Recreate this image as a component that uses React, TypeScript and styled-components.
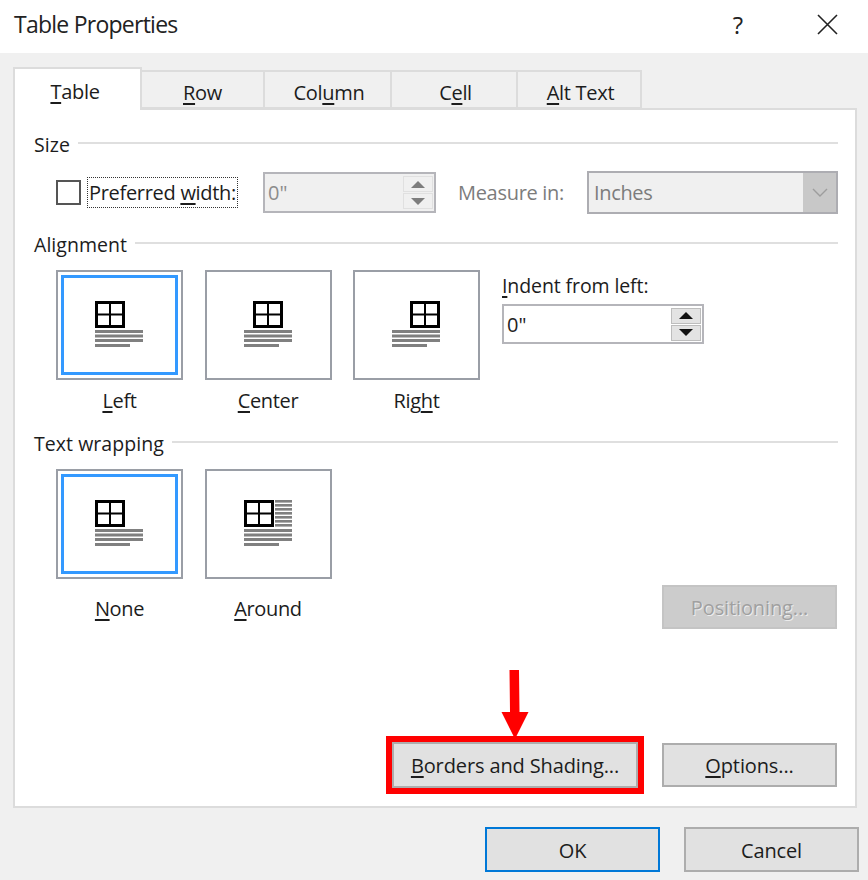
import React from "react";
import styled, { createGlobalStyle } from "styled-components";

const Global = createGlobalStyle`
  html, body { margin: 0; padding: 0; background: #fff; }
  body { font-family: "Open Sans", "Noto Sans", sans-serif; color: #1c1c1c; }
  * { box-sizing: border-box; }
  u { text-decoration-thickness: 1.5px; text-underline-offset: 3px; }
`;

const Dialog = styled.div`
  width: 868px;
  height: 880px;
  display: flex;
  flex-direction: column;
  overflow: hidden;
`;
const TitleBar = styled.header`
  height: 53px;
  flex: none;
  display: flex;
  align-items: center;
  padding: 0 30px 5px 14px;
  background: #fff;
`;
const Title = styled.h1`
  flex: 1;
  margin: 0;
  font-size: 23px;
  font-weight: 400;
  letter-spacing: -0.75px;
  color: #222;
`;
const HelpMark = styled.span`
  font-size: 24px;
  margin-right: 74px;
  color: #222;
`;
const Body = styled.main`
  flex: 1;
  display: flex;
  flex-direction: column;
  background: #f0f0f0;
  padding: 14px 11px 0 13px;
`;
const Tabs = styled.nav`
  display: flex;
  align-items: flex-end;
  height: 43px;
  position: relative;
  z-index: 1;
`;
const Tab = styled.div<{ $active?: boolean; $w: number; $nudge?: number }>`
  width: ${(p) => p.$w}px;
  height: ${(p) => (p.$active ? 43 : 39)}px;
  margin-bottom: ${(p) => (p.$active ? 0 : 1)}px;
  display: flex;
  align-items: center;
  justify-content: center;
  padding-top: ${(p) => (p.$active ? 3 : 6)}px;
  padding-left: ${(p) => p.$nudge ?? 0}px;
  font-size: 20px;
  letter-spacing: -0.3px;
  background: ${(p) => (p.$active ? "#fff" : "#f0f0f0")};
  border: 2px solid #dcdcdc;
  border-left-width: ${(p) => (p.$active ? 2 : 0)}px;
  border-bottom-width: ${(p) => (p.$active ? 0 : 2)}px;
`;
const TableTabLabel = styled.span`
  margin-left: -5px;
`;
const Panel = styled.section`
  height: 700px;
  margin-top: -2px;
  background: #fff;
  border: 2px solid #dcdcdc;
  padding: 22px 17px 18px 19px;
  display: flex;
  flex-direction: column;
`;
const SectionHead = styled.div<{ $mt?: number }>`
  display: flex;
  align-items: center;
  gap: 8px;
  height: 24px;
  margin-top: ${(p) => p.$mt ?? 0}px;
  font-size: 19.5px;
  letter-spacing: 0.05px;
  &::after {
    content: "";
    flex: 1;
    height: 2px;
    margin-top: -3px;
    background: #dfdfdf;
  }
`;
const SizeRow = styled.div`
  display: flex;
  align-items: center;
  height: 41px;
  margin-top: 16px;
  padding-left: 22px;
`;
const Check = styled.span`
  width: 25px;
  height: 25px;
  flex: none;
  border: 2px solid #555;
  background: #fff;
`;
const FocusLabel = styled.label`
  width: 151px;
  height: 31px;
  margin-left: 6px;
  flex: none;
  display: flex;
  align-items: center;
  justify-content: center;
  border: 1.5px dotted #333;
  font-size: 20px;
  letter-spacing: -0.3px;
  white-space: nowrap;
`;
const SpinBox = styled.div<{ $off?: boolean; $w: number; $h: number; $ml?: number }>`
  width: ${(p) => p.$w}px;
  height: ${(p) => p.$h}px;
  margin-left: ${(p) => p.$ml ?? 0}px;
  flex: none;
  display: flex;
  align-items: center;
  justify-content: space-between;
  padding: 0 1px 0 3px;
  border: 2px solid #b5b5ba;
  background: ${(p) => (p.$off ? "#f0f0f0" : "#fff")};
  color: ${(p) => (p.$off ? "#8c8c8c" : "#222")};
  font-size: 20px;
`;
const SpinButtons = styled.div`
  width: 30px;
  display: flex;
  flex-direction: column;
  gap: 1px;
`;
const SpinButton = styled.div<{ $off?: boolean }>`
  height: 16px;
  display: flex;
  align-items: center;
  justify-content: center;
  background: ${(p) => (p.$off ? "#f0f0f0" : "#e3e3e3")};
  border: 1.5px solid ${(p) => (p.$off ? "#e0e0e0" : "#bdbdbd")};
`;
const Muted = styled.span`
  margin-left: 22px;
  width: 129px;
  flex: none;
  font-size: 20px;
  letter-spacing: -0.3px;
  color: #7c7c7c;
  white-space: nowrap;
`;
const Select = styled.div`
  width: 251px;
  height: 43px;
  flex: none;
  display: flex;
  align-items: stretch;
  border: 2px solid #adadb2;
  background: #f0f0f0;
  font-size: 20px;
  letter-spacing: -0.35px;
  color: #7c7c7c;
`;
const SelectValue = styled.span`
  flex: 1;
  display: flex;
  align-items: center;
  padding-left: 5px;
`;
const SelectArrow = styled.span`
  width: 33px;
  display: flex;
  align-items: center;
  justify-content: center;
  background: #c8c8c8;
`;
const OptionsRow = styled.div<{ $mt: number }>`
  display: flex;
  align-items: flex-start;
  margin-top: ${(p) => p.$mt}px;
  padding-left: 22px;
`;
const TileGroup = styled.div`
  display: flex;
  gap: 21.5px;
`;
const TileColumn = styled.div<{ $gap: number }>`
  width: 127px;
  display: flex;
  flex-direction: column;
  align-items: center;
  gap: ${(p) => p.$gap}px;
`;
const Tile = styled.div<{ $on?: boolean }>`
  width: 127px;
  height: 110px;
  display: flex;
  align-items: center;
  justify-content: center;
  padding-right: 1px;
  background: #fff;
  border: 2px solid #9a9ea6;
  box-shadow: ${(p) =>
    p.$on ? "inset 0 0 0 3px #fff, inset 0 0 0 6px #3399ff" : "none"};
`;
const TileLabel = styled.div`
  height: 24px;
  line-height: 24px;
  font-size: 20px;
  letter-spacing: -0.35px;
  white-space: nowrap;
`;
const IndentColumn = styled.div`
  margin-left: 22px;
  display: flex;
  flex-direction: column;
  gap: 6px;
  padding-top: 3px;
`;
const IndentLabel = styled.div`
  height: 25px;
  line-height: 25px;
  font-size: 19.5px;
  letter-spacing: -0.1px;
  white-space: nowrap;
`;
const WrapRow = styled(OptionsRow)`
  justify-content: space-between;
  align-items: flex-end;
  padding-right: 1px;
`;
const WrapTiles = styled(TileGroup)`
  padding-bottom: 8px;
`;
const Action = styled.button<{ $w: number; $h?: number; $off?: boolean; $primary?: boolean }>`
  width: ${(p) => p.$w}px;
  height: ${(p) => p.$h ?? 44}px;
  padding: 1px 0 0;
  font: inherit;
  font-size: 20px;
  letter-spacing: -0.12px;
  color: ${(p) => (p.$off ? "#a0a0a0" : "#1c1c1c")};
  text-shadow: ${(p) => (p.$off ? "1px 1px 0 #ececec" : "none")};
  background: ${(p) => (p.$off ? "#cccccc" : "#e1e1e1")};
  border: 2px solid ${(p) => (p.$off ? "#c4c4c4" : p.$primary ? "#0078d7" : "#adadad")};
  flex: none;
`;
const PanelActions = styled.div`
  margin-top: auto;
  display: flex;
  justify-content: flex-end;
  align-items: center;
  gap: 24px;
  padding-right: 1px;
`;
const Highlight = styled.div`
  position: relative;
  flex: none;
  &::after {
    content: "";
    position: absolute;
    inset: -6px;
    border: 6px solid #ff0000;
    pointer-events: none;
  }
`;
const Arrow = styled.svg`
  position: absolute;
  left: 109px;
  top: -72px;
  width: 28px;
  height: 70px;
  z-index: 1;
`;
const Footer = styled.footer`
  display: flex;
  justify-content: flex-end;
  gap: 24px;
  margin-top: 19px;
  margin-right: -2px;
`;

const TableIcon = ({ around, offset }: { around?: boolean; offset: number }) => (
  <svg width="48" height="48" viewBox="0 0 48 48" aria-hidden="true">
    <g fill="none" stroke="#000">
      <rect x={offset + 1.5} y="1.5" width="27" height="24" strokeWidth="3" />
      <path d={`M${offset + 15} 2V25M${offset + 2} 13.5H${offset + 28}`} strokeWidth="2" />
    </g>
    <g fill="#808080">
      {(around ? [0, 4, 8, 12, 16, 20, 24] : []).map((y) => (
        <rect key={y} x="31" y={y} width="17" height="2.6" />
      ))}
      {[29, 33.5, 38].map((y) => (
        <rect key={y} y={y} width="48" height="3" />
      ))}
      <rect y="43" width="35" height="3" />
    </g>
  </svg>
);

const Tri = ({ up, color }: { up?: boolean; color: string }) => (
  <svg width="14" height="7" viewBox="0 0 14 7" aria-hidden="true">
    <path d={up ? "M7 0L14 7H0Z" : "M0 0H14L7 7Z"} fill={color} />
  </svg>
);

const Spinners = ({ off }: { off?: boolean }) => (
  <SpinButtons>
    <SpinButton $off={off}><Tri up color={off ? "#7d7d7d" : "#111"} /></SpinButton>
    <SpinButton $off={off}><Tri color={off ? "#7d7d7d" : "#111"} /></SpinButton>
  </SpinButtons>
);

export default function App() {
  return (
    <Dialog>
      <Global />
      <TitleBar>
        <Title>Table Properties</Title>
        <HelpMark>?</HelpMark>
        <svg width="21" height="21" viewBox="0 0 21 21" aria-hidden="true">
          <path d="M1 1L20 20M20 1L1 20" stroke="#222" strokeWidth="1.6" fill="none" />
        </svg>
      </TitleBar>
      <Body>
        <Tabs>
          <Tab $active $w={129}><TableTabLabel><u>T</u>able</TableTabLabel></Tab>
          <Tab $w={123}><span><u>R</u>ow</span></Tab>
          <Tab $w={127} $nudge={3}><span>Col<u>u</u>mn</span></Tab>
          <Tab $w={126} $nudge={3}><span>C<u>e</u>ll</span></Tab>
          <Tab $w={124} $nudge={3}><span><u>A</u>lt Text</span></Tab>
        </Tabs>
        <Panel>
          <SectionHead>Size</SectionHead>
          <SizeRow>
            <Check />
            <FocusLabel><span>Preferred <u>w</u>idth:</span></FocusLabel>
            <SpinBox $off $w={173} $h={41} $ml={25}>
              <span>0"</span>
              <Spinners off />
            </SpinBox>
            <Muted>Measure in:</Muted>
            <Select>
              <SelectValue>Inches</SelectValue>
              <SelectArrow>
                <svg width="16" height="9" viewBox="0 0 16 9" aria-hidden="true">
                  <path d="M1 1L8 8L15 1" stroke="#9d9d9d" strokeWidth="1.4" fill="none" />
                </svg>
              </SelectArrow>
            </Select>
          </SizeRow>
          <SectionHead $mt={19}>Alignment</SectionHead>
          <OptionsRow $mt={14}>
            <TileGroup>
              <TileColumn $gap={9}>
                <Tile $on><TableIcon offset={0} /></Tile>
                <TileLabel><u>L</u>eft</TileLabel>
              </TileColumn>
              <TileColumn $gap={9}>
                <Tile><TableIcon offset={9} /></Tile>
                <TileLabel><u>C</u>enter</TileLabel>
              </TileColumn>
              <TileColumn $gap={9}>
                <Tile><TableIcon offset={18} /></Tile>
                <TileLabel>Rig<u>h</u>t</TileLabel>
              </TileColumn>
            </TileGroup>
            <IndentColumn>
              <IndentLabel><u>I</u>ndent from left:</IndentLabel>
              <SpinBox $w={202} $h={40}>
                <span>0"</span>
                <Spinners />
              </SpinBox>
            </IndentColumn>
          </OptionsRow>
          <SectionHead $mt={18}>Text wrapping</SectionHead>
          <WrapRow $mt={14}>
            <WrapTiles>
              <TileColumn $gap={18}>
                <Tile $on><TableIcon offset={0} /></Tile>
                <TileLabel><u>N</u>one</TileLabel>
              </TileColumn>
              <TileColumn $gap={18}>
                <Tile><TableIcon offset={0} around /></Tile>
                <TileLabel><u>A</u>round</TileLabel>
              </TileColumn>
            </WrapTiles>
            <Action $off $w={175} $h={44}>Positioning...</Action>
          </WrapRow>
          <PanelActions>
            <Highlight>
              <Arrow viewBox="0 0 28 70" aria-hidden="true">
                <path d="M8.5 0H18L18.5 42H27.5L14 69L0.5 42H9Z" fill="#ff0000" />
              </Arrow>
              <Action $w={246} $h={46}><u>B</u>orders and Shading...</Action>
            </Highlight>
            <Action $w={175}><u>O</u>ptions...</Action>
          </PanelActions>
        </Panel>
        <Footer>
          <Action $primary $w={175} $h={45}>OK</Action>
          <Action $w={175} $h={45}>Cancel</Action>
        </Footer>
      </Body>
    </Dialog>
  );
}
